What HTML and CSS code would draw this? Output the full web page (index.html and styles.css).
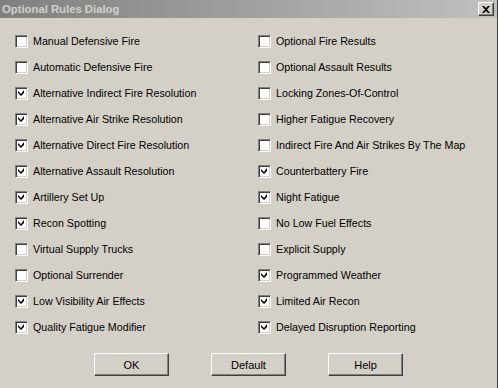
FILE: index.html
```html
<!DOCTYPE html>
<html lang="en">
<head>
  <meta charset="UTF-8">
  <title>Optional Rules Dialog</title>
  <link rel="stylesheet" href="styles.css">
</head>
<body>
  <div class="dialog">
    <div class="titlebar">
      <span class="title">Optional Rules Dialog</span>
      <span class="close">
        <svg width="8" height="7" viewBox="0 0 8 7"><path d="M0 0h2l2 2 2-2h2L5 3.5 8 7H6L4 5 2 7H0l3-3.5z" fill="#000"/></svg>
      </span>
    </div>
    <div class="rules">
      <div class="col">
        <label class="opt"><span class="box"></span>Manual Defensive Fire</label>
        <label class="opt"><span class="box"></span>Automatic Defensive Fire</label>
        <label class="opt"><span class="box on"></span>Alternative Indirect Fire Resolution</label>
        <label class="opt"><span class="box on"></span>Alternative Air Strike Resolution</label>
        <label class="opt"><span class="box on"></span>Alternative Direct Fire Resolution</label>
        <label class="opt"><span class="box on"></span>Alternative Assault Resolution</label>
        <label class="opt"><span class="box on"></span>Artillery Set Up</label>
        <label class="opt"><span class="box on"></span>Recon Spotting</label>
        <label class="opt"><span class="box"></span>Virtual Supply Trucks</label>
        <label class="opt"><span class="box"></span>Optional Surrender</label>
        <label class="opt"><span class="box on"></span>Low Visibility Air Effects</label>
        <label class="opt"><span class="box on"></span>Quality Fatigue Modifier</label>
      </div>
      <div class="col">
        <label class="opt"><span class="box"></span>Optional Fire Results</label>
        <label class="opt"><span class="box"></span>Optional Assault Results</label>
        <label class="opt"><span class="box"></span>Locking Zones-Of-Control</label>
        <label class="opt"><span class="box"></span>Higher Fatigue Recovery</label>
        <label class="opt"><span class="box"></span>Indirect Fire And Air Strikes By The Map</label>
        <label class="opt"><span class="box on"></span>Counterbattery Fire</label>
        <label class="opt"><span class="box on"></span>Night Fatigue</label>
        <label class="opt"><span class="box"></span>No Low Fuel Effects</label>
        <label class="opt"><span class="box"></span>Explicit Supply</label>
        <label class="opt"><span class="box on"></span>Programmed Weather</label>
        <label class="opt"><span class="box on"></span>Limited Air Recon</label>
        <label class="opt"><span class="box on"></span>Delayed Disruption Reporting</label>
      </div>
    </div>
    <div class="buttons">
      <button class="btn">OK</button>
      <button class="btn">Default</button>
      <button class="btn">Help</button>
    </div>
  </div>
</body>
</html>
```

FILE: styles.css
```css
/* classic win2k dialog */
html, body {
  margin: 0;
  padding: 0;
  background: #d4d0c8;
}
body {
  font-family: "Liberation Sans", Arial, sans-serif;
  font-size: 10.7px;
  color: #000;
}
.dialog {
  width: 497px;
  height: 388px;
  border-right: 1px solid #404040;
  background: #d4d0c8;
}
.titlebar {
  height: 18px;
  display: flex;
  align-items: center;
  justify-content: space-between;
  padding: 0 3px 0 2px;
  background: linear-gradient(90deg, #808080 0%, #c0c0c0 100%);
}
.title {
  font-family: "Liberation Sans", Arial, sans-serif;
  font-weight: bold;
  font-size: 11.3px;
  color: #d4d0c8;
}
.close {
  width: 16px;
  height: 14px;
  box-sizing: border-box;
  background: #d4d0c8;
  border: 1px solid;
  border-color: #fff #404040 #404040 #fff;
  box-shadow: inset -1px -1px 0 #808080;
  display: flex;
  align-items: center;
  justify-content: center;
}
.rules {
  display: flex;
  padding: 10px 0 0 15px;
}
.col {
  width: 246px;
  display: flex;
  flex-direction: column;
}
.col + .col {
  margin-left: 4px;
}
.opt {
  display: flex;
  align-items: center;
  height: 26px;
  white-space: nowrap;
}
.box {
  width: 13px;
  height: 13px;
  box-sizing: border-box;
  margin-right: 5px;
  background: #fff;
  border: 1px solid;
  border-color: #808080 #fff #fff #808080;
  box-shadow: inset 1px 1px 0 #404040, inset -1px -1px 0 #d4d0c8;
  position: relative;
}
.box.on::after {
  content: "";
  position: absolute;
  left: 2px;
  top: 2px;
  width: 7px;
  height: 7px;
  background: no-repeat center/7px 7px url("data:image/svg+xml,%3Csvg xmlns='http://www.w3.org/2000/svg' width='7' height='7'%3E%3Cpath d='M6 0v3L3 6 0 3V1l3 3z' fill='%23000'/%3E%3C/svg%3E");
}
.buttons {
  display: flex;
  justify-content: center;
  gap: 42px;
  padding-top: 13px;
}
.btn {
  width: 75px;
  height: 23px;
  font-family: "Liberation Sans", Arial, sans-serif;
  font-size: 11px;
  color: #000;
  background: #d4d0c8;
  border: 1px solid;
  border-color: #fff #404040 #404040 #fff;
  box-shadow: inset -1px -1px 0 #808080;
  padding: 0;
}
```
